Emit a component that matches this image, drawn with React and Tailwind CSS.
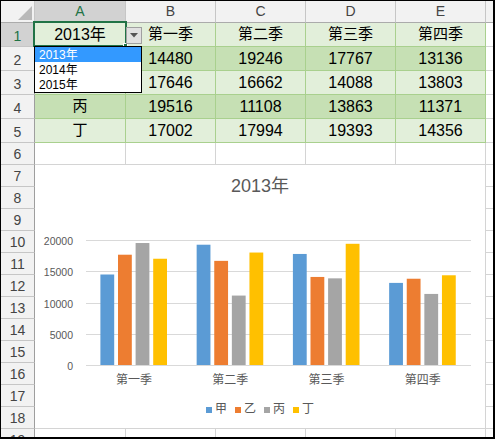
import React from 'react'

const font = "font-['Liberation_Sans','Noto_Sans_CJK_SC',sans-serif]"

const quarters = ['第一季', '第二季', '第三季', '第四季']
const data = [
  { name: '甲', values: [14480, 19246, 17767, 13136] },
  { name: '乙', values: [17646, 16662, 14088, 13803] },
  { name: '丙', values: [19516, 11108, 13863, 11371] },
  { name: '丁', values: [17002, 17994, 19393, 14356] },
]
const colors = ['#5b9bd5', '#ed7d31', '#a5a5a5', '#ffc000']
const letters = ['A', 'B', 'C', 'D', 'E']
const colW = ['w-[91px]', 'w-[90px]', 'w-[90px]', 'w-[90px]', 'w-[90px]']

// row number cell on the left
const RowHead = ({ n, tall, active }) => (
  <div
    className={`w-[34px] shrink-0 ${tall ? 'h-[24px] pt-[3px]' : 'h-[22px] pt-[1px]'} ${
      active ? 'bg-[#d2d2d2] text-[#217346]' : 'bg-[#f2f2f2] text-[#444]'
    } border-r border-r-[#9e9e9e] border-b border-b-[#c6c6c6] flex items-center justify-center text-[14px]`}
  >
    {n}
  </div>
)

const GreenCell = ({ w, bg, children, cjk }) => (
  <div
    className={`${w} shrink-0 h-full ${bg} border-r border-b border-[#a9d08e] flex items-center justify-center ${
      cjk ? 'text-[15px]' : 'text-[16px]'
    } text-black`}
  >
    {children}
  </div>
)

function DropdownCell() {
  return (
    <div className="relative w-[91px] shrink-0 h-full bg-[#e2efda] border-r border-b border-[#a9d08e] flex items-center justify-center text-[16px] text-black">
      2013年
      {/* selection frame */}
      <div className="absolute -left-[2px] -top-[2px] w-[94px] h-[26px] border-2 border-[#217346] z-10" />
      <div className="absolute left-[88px] top-[20px] w-[5px] h-[5px] bg-[#217346] border border-white z-10" />
      {/* arrow button */}
      <div className="absolute left-[91px] top-[4px] w-[16px] h-[17px] bg-[#e1e1e1] border border-[#a0a0a0] flex items-center justify-center z-20">
        <svg width="8" height="5" viewBox="0 0 8 5">
          <path d="M0 0 H8 L4 4.5 Z" fill="#555" />
        </svg>
      </div>
      {/* list */}
      <div className="absolute -left-[1px] top-[23px] w-[108px] h-[47px] bg-white border border-black z-20 flex flex-col text-[12px] leading-none">
        <div className="h-[15px] bg-[#3399ff] text-white flex items-center pl-[4px]">2013年</div>
        <div className="h-[15px] text-black flex items-center pl-[4px]">2014年</div>
        <div className="h-[15px] text-black flex items-center pl-[4px]">2015年</div>
      </div>
    </div>
  )
}

function Chart() {
  const y0 = 158
  const scale = 125 / 20000
  const ticks = [0, 5000, 10000, 15000, 20000]
  const catW = 96.25
  return (
    <div className="w-[451px] h-[264px] shrink-0 bg-white border-r border-b border-[#d4d4d4] flex flex-col">
      <div className="h-[42px] pt-[1px] flex items-center justify-center text-[18px] text-[#595959]">2013年</div>
      <svg width="450" height="185" className="block">
        {ticks.map((t) => {
          const y = Math.round(y0 - t * scale) + 0.5
          return (
            <g key={t}>
              <line x1="51" x2="436" y1={y} y2={y} stroke="#d9d9d9" strokeWidth="1" />
              <text x="38" y={y} textAnchor="end" dominantBaseline="central" fontSize="10.5" fill="#595959">
                {t}
              </text>
            </g>
          )
        })}
        {quarters.map((q, i) => (
          <g key={q}>
            {data.map((d, j) => {
              const h = d.values[i] * scale
              return (
                <rect
                  key={d.name}
                  x={51 + i * catW + 14.4 + j * 17.6}
                  y={y0 - h}
                  width="13.8"
                  height={h}
                  fill={colors[j]}
                />
              )
            })}
            <text x={51 + catW * (i + 0.5)} y="173" textAnchor="middle" dominantBaseline="central" fontSize="12" fill="#595959">
              {q}
            </text>
          </g>
        ))}
      </svg>
      <div className="h-[36px] pb-[2px] flex items-center justify-center gap-[8px] text-[12px] text-[#595959]">
        {data.map((d, j) => (
          <div key={d.name} className="flex items-center">
            <span className="w-[6px] h-[6px] mr-[3px] mt-[2px]" style={{ background: colors[j] }} />
            <span>{d.name}</span>
          </div>
        ))}
      </div>
    </div>
  )
}

export default function App() {
  const bgs = ['bg-[#c6e0b4]', 'bg-[#e2efda]', 'bg-[#c6e0b4]', 'bg-[#e2efda]']
  return (
    <div className={`w-[495px] h-[439px] overflow-hidden bg-white border-l border-t border-r-2 border-b-2 border-black flex flex-col ${font}`}>
      {/* column headers */}
      <div className="flex h-[22px] shrink-0">
        <div className="w-[34px] shrink-0 h-full bg-[#f2f2f2] border-r border-r-[#c6c6c6] border-b border-b-[#ababab] flex items-end justify-end pr-[2px] pb-[2px]">
          <svg width="14" height="14" viewBox="0 0 14 14">
            <path d="M14 0 V14 H0 Z" fill="#b9b9b9" />
          </svg>
        </div>
        {letters.map((l, i) => (
          <div
            key={l}
            className={`${colW[i]} shrink-0 h-full border-r border-r-[#c6c6c6] flex items-center justify-center text-[14px] ${
              i === 0 ? 'bg-[#d2d2d2] text-[#217346] border-b-2 border-b-[#217346]' : 'bg-[#f2f2f2] text-[#444] border-b border-b-[#ababab]'
            }`}
          >
            {l}
          </div>
        ))}
        <div className="flex-1 h-full bg-[#f2f2f2] border-b border-b-[#ababab]" />
      </div>

      {/* row 1 */}
      <div className="flex h-[24px] shrink-0">
        <RowHead n={1} tall active />
        <DropdownCell />
        {quarters.map((q, i) => (
          <GreenCell key={q} w={colW[i + 1]} bg="bg-[#e2efda]" cjk>
            {q}
          </GreenCell>
        ))}
        <div className="flex-1 h-full border-b border-[#d4d4d4]" />
      </div>

      {/* rows 2-5; A2 and A3 sit under the open list */}
      {data.map((d, r) => (
        <div key={d.name} className="flex h-[24px] shrink-0">
          <RowHead n={r + 2} tall />
          <GreenCell w={colW[0]} bg={bgs[r]} cjk>
            {r > 1 ? d.name : null}
          </GreenCell>
          {d.values.map((v, i) => (
            <GreenCell key={i} w={colW[i + 1]} bg={bgs[r]}>
              {v}
            </GreenCell>
          ))}
          <div className="flex-1 h-full border-b border-[#d4d4d4]" />
        </div>
      ))}

      {/* row 6 */}
      <div className="flex h-[22px] shrink-0">
        <RowHead n={6} />
        {letters.map((l, i) => (
          <div key={l} className={`${colW[i]} shrink-0 h-full border-r border-b border-[#d4d4d4]`} />
        ))}
        <div className="flex-1 h-full border-b border-[#d4d4d4]" />
      </div>

      {/* rows 7-18 with chart */}
      <div className="flex h-[264px] shrink-0">
        <div className="flex flex-col">
          {Array.from({ length: 12 }, (_, i) => (
            <RowHead key={i} n={i + 7} />
          ))}
        </div>
        <Chart />
        <div className="flex-1 flex flex-col">
          {Array.from({ length: 12 }, (_, i) => (
            <div key={i} className="h-[22px] border-b border-[#d4d4d4]" />
          ))}
        </div>
      </div>

      {/* row 19 (partly visible) */}
      <div className="flex flex-1 overflow-hidden">
        <div className="w-[34px] shrink-0 h-[22px] bg-[#f2f2f2] border-r border-r-[#9e9e9e] flex items-center justify-center text-[14px] text-[#444]">
          19
        </div>
        {letters.map((l, i) => (
          <div key={l} className={`${colW[i]} shrink-0 h-full border-r border-[#d4d4d4]`} />
        ))}
        <div className="flex-1" />
      </div>
    </div>
  )
}
